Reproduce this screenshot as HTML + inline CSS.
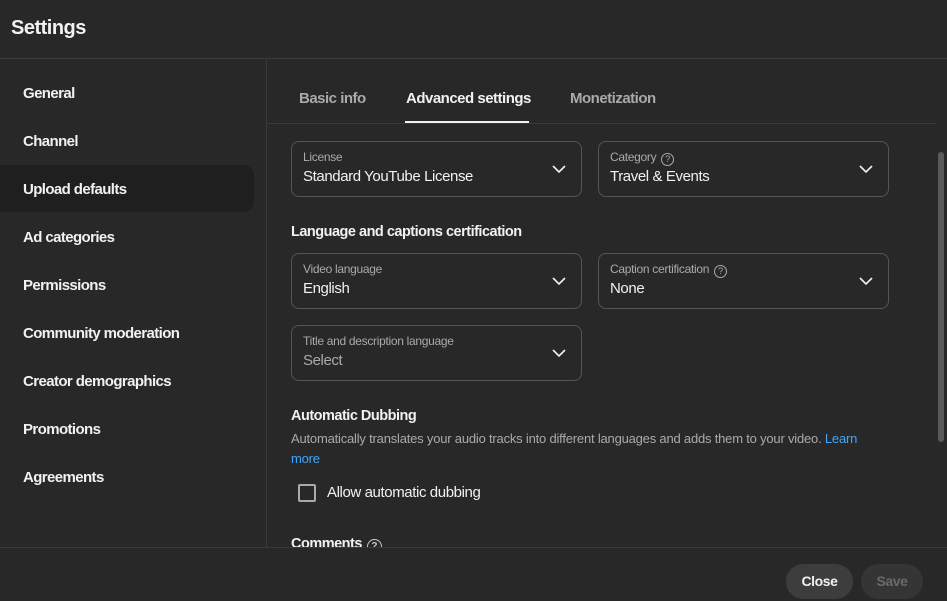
<!DOCTYPE html>
<html><head><style>
*{margin:0;padding:0;box-sizing:border-box}
body{width:947px;height:601px;background:#282828;font-family:"Liberation Sans",Roboto,sans-serif;color:#f1f1f1;position:relative;overflow:hidden}
.abs{position:absolute}
.nav{position:absolute;left:23px;font-size:15px;font-weight:bold;letter-spacing:-0.6px;color:#f1f1f1;top:0}
.tab{position:absolute;top:90px;font-size:15px;font-weight:bold;letter-spacing:-0.5px}
.box{position:absolute;width:291px;height:56px;border:1px solid #555;border-radius:8px}
.box .l{position:absolute;left:11px;top:8px;font-size:12px;color:#aaa;letter-spacing:-0.3px}
.box .v{position:absolute;left:11px;top:26px;font-size:15px;color:#f1f1f1;letter-spacing:-0.4px}
.box svg{position:absolute;right:15px;top:20px}
.q{display:inline-block;width:13px;height:13px;border:1.2px solid #aaa;border-radius:50%;font-size:9px;line-height:11px;text-align:center;vertical-align:-1px;margin-left:5px;color:#aaa;letter-spacing:0}
h3{position:absolute;left:291px;font-size:14.5px;font-weight:bold;letter-spacing:-0.5px}
.btn{position:absolute;top:564px;height:35px;border-radius:18px;background:#3d3d3d;font-size:14px;font-weight:bold;text-align:center;line-height:35px;letter-spacing:-0.4px}
</style></head><body>
<div class="abs" style="left:11px;top:17px;font-size:20px;font-weight:bold;letter-spacing:-0.5px">Settings</div>
<div class="abs" style="left:0;top:58px;width:947px;height:1px;background:#3a3a3a"></div>
<div class="abs" style="left:266px;top:59px;width:1px;height:489px;background:#3a3a3a"></div>
<div class="abs" style="left:0;top:547px;width:947px;height:1px;background:#3a3a3a"></div>
<div class="abs" style="left:0;top:165px;width:254px;height:47px;background:#1f1f1f;border-radius:0 10px 10px 0"></div>
<div class="nav" style="top:85px">General</div>
<div class="nav" style="top:133px">Channel</div>
<div class="nav" style="top:181px">Upload defaults</div>
<div class="nav" style="top:229px">Ad categories</div>
<div class="nav" style="top:277px">Permissions</div>
<div class="nav" style="top:325px">Community moderation</div>
<div class="nav" style="top:373px">Creator demographics</div>
<div class="nav" style="top:421px">Promotions</div>
<div class="nav" style="top:469px">Agreements</div>

<div class="tab" style="left:299px;color:#aaa">Basic info</div>
<div class="tab" style="left:406px;color:#f1f1f1">Advanced settings</div>
<div class="tab" style="left:570px;color:#aaa">Monetization</div>
<div class="abs" style="left:405px;top:121px;width:124px;height:2px;background:#f1f1f1"></div>
<div class="abs" style="left:267px;top:123px;width:670px;height:1px;background:#3a3a3a"></div>

<div class="box" style="left:291px;top:141px"><div class="l">License</div><div class="v">Standard YouTube License</div><svg width="14" height="14" viewBox="0 0 14 14"><path d="M1 4l6 6 6-6" fill="none" stroke="#f1f1f1" stroke-width="1.6"/></svg></div>
<div class="box" style="left:598px;top:141px"><div class="l">Category<span class="q">?</span></div><div class="v">Travel &amp; Events</div><svg width="14" height="14" viewBox="0 0 14 14"><path d="M1 4l6 6 6-6" fill="none" stroke="#f1f1f1" stroke-width="1.6"/></svg></div>
<h3 style="top:224px">Language and captions certification</h3>
<div class="box" style="left:291px;top:253px"><div class="l">Video language</div><div class="v">English</div><svg width="14" height="14" viewBox="0 0 14 14"><path d="M1 4l6 6 6-6" fill="none" stroke="#f1f1f1" stroke-width="1.6"/></svg></div>
<div class="box" style="left:598px;top:253px"><div class="l">Caption certification<span class="q">?</span></div><div class="v">None</div><svg width="14" height="14" viewBox="0 0 14 14"><path d="M1 4l6 6 6-6" fill="none" stroke="#f1f1f1" stroke-width="1.6"/></svg></div>
<div class="box" style="left:291px;top:325px"><div class="l">Title and description language</div><div class="v" style="color:#aaa">Select</div><svg width="14" height="14" viewBox="0 0 14 14"><path d="M1 4l6 6 6-6" fill="none" stroke="#f1f1f1" stroke-width="1.6"/></svg></div>
<h3 style="top:408px">Automatic Dubbing</h3>
<div class="abs" style="left:291px;top:429px;width:600px;font-size:13px;line-height:20px;color:#aaa;letter-spacing:-0.2px">Automatically translates your audio tracks into different languages and adds them to your video. <span style="color:#3ea6ff">Learn<br>more</span></div>
<div class="abs" style="left:298px;top:484px;width:18px;height:18px;border:2px solid #aaa;border-radius:2px"></div>
<div class="abs" style="left:327px;top:484px;font-size:15px;letter-spacing:-0.4px">Allow automatic dubbing</div>
<div class="abs" style="left:267px;top:530px;width:670px;height:17px;overflow:hidden"><h3 style="left:24px;top:6px">Comments<span class="q" style="border-color:#ccc;color:#ccc;width:15px;height:15px;line-height:13px;font-size:10px">?</span></h3></div>
<div class="abs" style="left:938px;top:152px;width:6px;height:290px;background:#5a5a5a;border-radius:3px"></div>
<div class="btn" style="left:786px;width:67px;color:#f1f1f1">Close</div>
<div class="btn" style="left:861px;width:62px;color:#6a6a6a;background:#353535">Save</div>
</body></html>
